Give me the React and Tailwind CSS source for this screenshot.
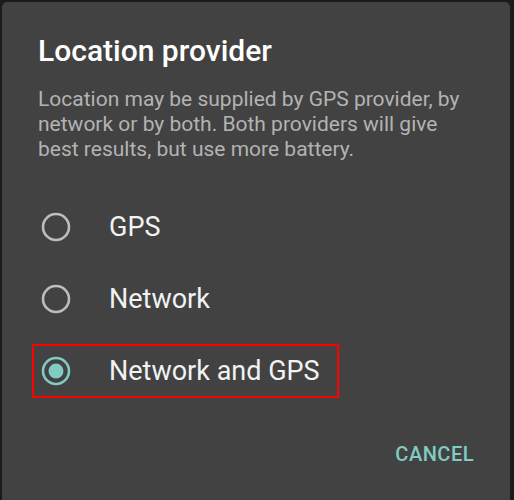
const options = ["GPS", "Network", "Network and GPS"];

function Radio({ checked }) {
  return (
    <svg width="32" height="32" viewBox="0 0 32 32">
      <circle
        cx="16"
        cy="16"
        r="13"
        fill="none"
        stroke={checked ? "#80cbc4" : "#bdbdbd"}
        strokeWidth="2.6"
      />
      {checked && <circle cx="16" cy="16" r="7.5" fill="#80cbc4" />}
    </svg>
  );
}

export default function App() {
  return (
    <div
      className="w-[514px] h-[500px] overflow-hidden bg-[#1b1b1b] pt-[2px] pl-[2px]"
      style={{ fontFamily: "Roboto, 'Noto Sans', sans-serif" }}
    >
      <div className="w-[508px] h-[520px] rounded-[5px] bg-[#424242]">
        {/* HEADER */}
        <div className="pl-[36px] pr-6 pt-[31px]">
          <h1 className="text-[30px] leading-[36px] font-medium text-white">
            Location provider
          </h1>

          <p className="mt-[18px] text-[21px] leading-[25px] text-[#b3b3b3]">
            Location may be supplied by GPS provider, by
            <br />
            network or by both. Both providers will give
            <br />
            best results, but use more battery.
          </p>
        </div>

        {/* OPTIONS */}
        <div className="mt-[29px] flex flex-col">
          {options.map((label, i) => {
            const checked = i === 2;
            return (
              <div key={label} className="h-[72px] flex items-center">
                <div
                  className={`ml-[30px] h-[54px] w-[307px] flex items-center ${
                    checked ? "border-2 border-[#ff0000]" : "border-2 border-transparent"
                  }`}
                >
                  <div className="ml-[6px] flex">
                    <Radio checked={checked} />
                  </div>
                  <span className="ml-[37px] text-[27px] text-[#f2f2f2]">
                    {label}
                  </span>
                </div>
              </div>
            );
          })}
        </div>

        {/* ACTIONS */}
        <div className="mt-[32px] flex justify-end pr-[36px]">
          <button className="text-[20px] font-medium text-[#80cbc4] tracking-[0.5px]">
            CANCEL
          </button>
        </div>
      </div>
    </div>
  );
}
